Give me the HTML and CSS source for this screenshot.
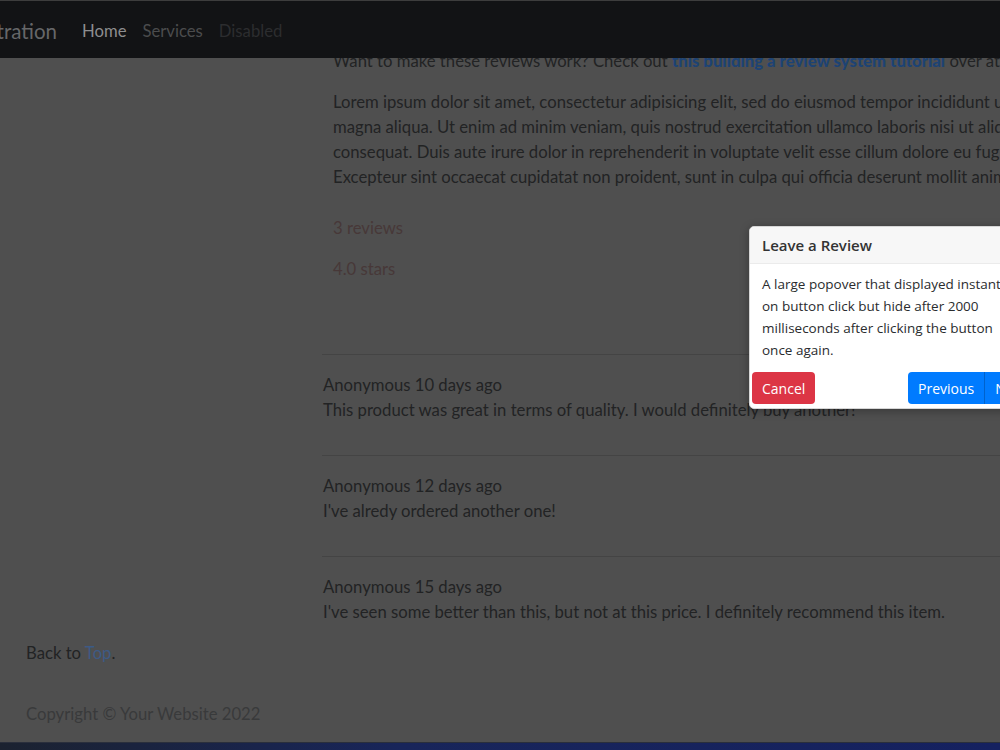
FILE: index.html
```html
<!DOCTYPE html>
<html lang="en">
<head>
    <meta charset="UTF-8">
    <meta name="viewport" content="width=device-width, initial-scale=1.0">
    <title>Reviews</title>
    <link rel="stylesheet" href="styles.css">
</head>
<body>
    <nav class="navbar">
        <div class="brand"><span>Review Demonstration</span></div>
        <a class="nav-link active" href="#">Home</a>
        <a class="nav-link" href="#">Services</a>
        <a class="nav-link disabled" href="#">Disabled</a>
    </nav>

    <div class="page">
        <aside class="sidebar"></aside>

        <main class="content">
            <div class="intro">
                <p class="lead-line">Want to make these reviews work? Check out <a class="bold-link" href="#">this building a review system tutorial</a> over at our blog.</p>
                <p>Lorem ipsum dolor sit amet, consectetur adipisicing elit, sed do eiusmod tempor incididunt ut labore et dolore magna aliqua. Ut enim ad minim veniam, quis nostrud exercitation ullamco laboris nisi ut aliquip ex ea commodo consequat. Duis aute irure dolor in reprehenderit in voluptate velit esse cillum dolore eu fugiat nulla pariatur. Excepteur sint occaecat cupidatat non proident, sunt in culpa qui officia deserunt mollit anim id est laborum.</p>
                <p class="rating first">3 reviews</p>
                <p class="rating">4.0 stars</p>
            </div>

            <!-- REVIEWS -->
            <div class="review">
                <div>Anonymous 10 days ago</div>
                <div>This product was great in terms of quality. I would definitely buy another!</div>
            </div>
            <div class="review">
                <div>Anonymous 12 days ago</div>
                <div>I've alredy ordered another one!</div>
            </div>
            <div class="review">
                <div>Anonymous 15 days ago</div>
                <div>I've seen some better than this, but not at this price. I definitely recommend this item.</div>
            </div>
        </main>
    </div>

    <footer class="footer">
        <p>Back to <a class="top-link" href="#">Top</a>.</p>
        <p class="copyright">Copyright &copy; Your Website 2022</p>
    </footer>

    <div class="taskbar"></div>

    <!-- POPOVER -->
    <div class="popover">
        <div class="popover-header">Leave a Review</div>
        <div class="popover-body">A large popover that displayed instantly on button click but hide after 2000 milliseconds after clicking the button once again.</div>
        <div class="popover-actions">
            <button class="btn btn-danger">Cancel</button>
            <div class="btn-group">
                <button class="btn btn-primary">Previous</button>
                <button class="btn btn-primary">Next</button>
            </div>
        </div>
    </div>
</body>
</html>
```

FILE: styles.css
```css
html, body {
    height: 100%;
}
body {
    margin: 0;
    font-family: 'Lato', 'Open Sans', sans-serif;
    font-size: 16.7px;
    line-height: 25px;
    background: #4f4f4f;
    color: #222324;
    overflow: hidden;
    position: relative;
}
a {
    text-decoration: none;
}
p {
    margin: 0 0 16px;
}
.navbar {
    position: fixed;
    top: 0;
    left: 0;
    right: 0;
    height: 54px;
    padding-top: 3px;
    display: flex;
    align-items: center;
    background: #121315;
    border-top: 1px solid #3d3d3d;
    z-index: 5;
}
.brand {
    width: 57px;
    overflow: hidden;
    display: flex;
    justify-content: flex-end;
    white-space: nowrap;
    font-size: 20.5px;
    color: #666769;
    margin-right: 17px;
}
.nav-link {
    padding: 0 8px;
    color: #4b4c4d;
}
.nav-link.active {
    color: #8d8e8f;
}
.nav-link.disabled {
    color: #2c2d2f;
}
.page {
    display: flex;
    padding-top: 49px;
}
.sidebar {
    width: 322px;
    flex-shrink: 0;
}
.content {
    flex: 1;
    min-width: 0;
}
.intro {
    padding: 0 0 56px 11px;
    width: 825px;
}
.lead-line {
    white-space: nowrap;
}
.bold-link {
    font-weight: 900;
    color: #1d4374;
}
.rating {
    color: #473838;
}
.rating.first {
    margin-top: 26px;
}
.review {
    border-top: 1px solid #444444;
    padding: 18px 0 32px 1px;
    white-space: nowrap;
}
.review:last-child {
    padding-bottom: 0;
}
.footer {
    padding: 16px 26px 0;
}
.top-link {
    color: #3d5a85;
}
.copyright {
    margin-top: 36px;
    color: #393a3b;
}
.taskbar {
    position: absolute;
    left: 0;
    right: 0;
    bottom: 0;
    height: 7px;
    border-top: 1px solid #2a2f3c;
    background: linear-gradient(90deg, #1b2230 0%, #18255a 40%, #152160 100%);
}
.popover {
    position: absolute;
    left: 749px;
    top: 226px;
    width: 280px;
    background: #ffffff;
    border: 1px solid #d6d6d6;
    border-radius: 5px;
    box-shadow: 0 2px 10px rgba(0, 0, 0, 0.3);
    z-index: 10;
    font-family: 'Open Sans', sans-serif;
}
.popover-header {
    height: 36px;
    display: flex;
    align-items: center;
    padding: 0 12px;
    background: #f7f7f7;
    border-bottom: 1px solid #ebebeb;
    border-radius: 5px 5px 0 0;
    font-size: 15px;
    font-weight: 600;
    color: #333333;
}
.popover-body {
    padding: 9px 12px 0;
    font-size: 13.5px;
    line-height: 22px;
    color: #2a2c2e;
}
.popover-actions {
    display: flex;
    align-items: center;
    padding: 11px 0 4px 2px;
}
.btn {
    height: 32px;
    padding: 0 10px;
    border: none;
    border-radius: 4px;
    font-family: 'Open Sans', sans-serif;
    font-size: 14px;
    color: #ffffff;
}
.btn-danger {
    background: #dc3545;
}
.btn-primary {
    background: #007bff;
}
.btn-group {
    display: flex;
    margin-left: auto;
    margin-right: -6px;
}
.btn-group .btn {
    border-radius: 0;
}
.btn-group .btn:first-child {
    border-radius: 4px 0 0 4px;
    border-right: 1px solid #0062cc;
}
```
